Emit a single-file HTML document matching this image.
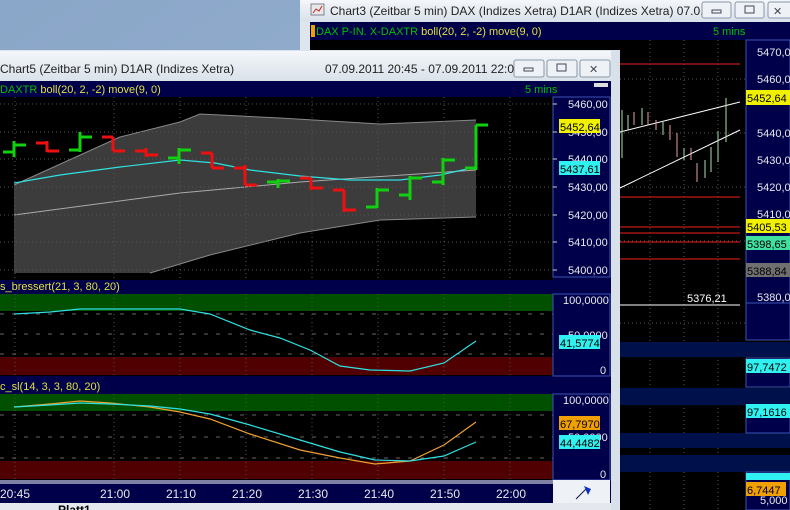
<!DOCTYPE html>
<html><head><meta charset="utf-8"><style>
html,body{margin:0;padding:0;width:790px;height:510px;overflow:hidden;background:#8fa9c8}
svg{display:block;font-family:"Liberation Sans",sans-serif}
</style></head><body>
<svg width="790" height="510" viewBox="0 0 790 510" xmlns="http://www.w3.org/2000/svg">
<defs>
<linearGradient id="tb" x1="0" y1="0" x2="0" y2="1"><stop offset="0" stop-color="#f4f7fa"/><stop offset="1" stop-color="#d9e1ea"/></linearGradient>
<linearGradient id="bg" x1="0" y1="0" x2="1" y2="1"><stop offset="0" stop-color="#8aa6c8"/><stop offset="1" stop-color="#a0b8d4"/></linearGradient>
</defs>
<rect width="790" height="510" fill="url(#bg)"/>
<!-- Chart3 window -->
<rect x="300" y="0" width="490" height="510" fill="#dde5ee"/>
<rect x="300" y="0" width="490" height="22" fill="url(#tb)"/>
<rect x="311" y="4" width="13" height="11" fill="#e8e8e8" stroke="#667" stroke-width="0.8"/>
<path d="M313 13 l3 -4 l3 2 l3 -5" stroke="#c22" fill="none"/>
<text x="330" y="15" font-size="12" fill="#222">Chart3 (Zeitbar 5 min)  DAX (Indizes Xetra) D1AR (Indizes Xetra) 07.0...</text>
<g fill="#eef2f6" stroke="#8a98a8"><rect x="702" y="2" width="29" height="16" rx="2"/><rect x="735" y="2" width="29" height="16" rx="2"/><rect x="768" y="2" width="29" height="16" rx="2"/></g>
<rect x="712" y="10" width="9" height="3" fill="none" stroke="#445"/><rect x="745" y="6" width="9" height="7" fill="none" stroke="#445"/>
<text x="773" y="15" font-size="11" fill="#445">✕</text>
<rect x="310" y="22" width="480" height="488" fill="#000"/>
<rect x="310" y="22" width="480" height="18" fill="#00004a"/>
<rect x="311" y="25" width="4" height="12" fill="#f0a000"/>
<text x="316" y="35" font-size="11" fill="#00c000">DAX P-IN. X-DAXTR <tspan fill="#e0e040">boll(20, 2, -2) move(9, 0)</tspan></text>
<text x="713" y="35" font-size="11" fill="#00c000">5 mins</text>
<!-- right chart grid -->
<g stroke="#555" stroke-dasharray="1,3">
<line x1="650" y1="40" x2="650" y2="510"/><line x1="684" y1="40" x2="684" y2="510"/><line x1="718" y1="40" x2="718" y2="510"/>
<line x1="620" y1="79" x2="745" y2="79"/><line x1="620" y1="133" x2="745" y2="133"/><line x1="620" y1="187" x2="745" y2="187"/><line x1="620" y1="241" x2="745" y2="241"/><line x1="620" y1="323" x2="745" y2="323"/>
</g>
<g stroke="#c01818" stroke-width="1.2"><line x1="620" y1="64" x2="740" y2="64"/><line x1="620" y1="197" x2="740" y2="197"/><line x1="620" y1="227" x2="740" y2="227"/><line x1="620" y1="233" x2="740" y2="233"/><line x1="620" y1="242" x2="740" y2="242"/><line x1="620" y1="259" x2="740" y2="259"/></g>
<line x1="620" y1="305" x2="740" y2="305" stroke="#fff"/>
<text x="687" y="302" font-size="11" fill="#fff">5376,21</text>
<g stroke="#fff"><line x1="620" y1="132" x2="740" y2="102"/><line x1="620" y1="188" x2="740" y2="130"/></g>
<g stroke="#b0e0b0"><line x1="622" y1="110" x2="622" y2="158"/><line x1="628" y1="115" x2="628" y2="130"/><line x1="642" y1="108" x2="642" y2="125"/><line x1="663" y1="122" x2="663" y2="135"/><line x1="684" y1="148" x2="684" y2="160"/><line x1="705" y1="160" x2="705" y2="178"/><line x1="711" y1="147" x2="711" y2="172"/><line x1="718" y1="131" x2="718" y2="162"/><line x1="726" y1="98" x2="726" y2="142"/></g>
<g stroke="#e8a0a0"><line x1="634" y1="112" x2="634" y2="125"/><line x1="648" y1="112" x2="648" y2="125"/><line x1="656" y1="120" x2="656" y2="130"/><line x1="670" y1="125" x2="670" y2="140"/><line x1="677" y1="133" x2="677" y2="157"/><line x1="691" y1="148" x2="691" y2="160"/><line x1="697" y1="163" x2="697" y2="182"/></g>
<!-- right axis -->
<rect x="746" y="40" width="44" height="263" fill="#00004a" stroke="#3a55b0"/>
<g font-size="11" fill="#e8e8e8"><text x="757" y="56">5470,0</text><text x="757" y="83">5460,0</text><text x="757" y="137">5440,0</text><text x="757" y="164">5430,0</text><text x="757" y="191">5420,0</text><text x="757" y="218">5410,0</text><text x="757" y="301">5380,0</text><text x="757" y="327">5370,0</text></g>
<rect x="746" y="303" width="44" height="37" fill="#00004a" stroke="#3a55b0"/>
<rect x="620" y="342" width="170" height="15" fill="#00104a"/>
<rect x="620" y="388" width="170" height="17" fill="#00104a"/>
<rect x="620" y="433" width="170" height="15" fill="#00104a"/>
<rect x="620" y="455" width="170" height="17" fill="#00104a"/>
<rect x="746" y="358" width="44" height="29" fill="#00004a" stroke="#3a55b0"/>
<rect x="746" y="405" width="44" height="28" fill="#00004a" stroke="#3a55b0"/>
<rect x="746" y="472" width="44" height="38" fill="#00004a" stroke="#3a55b0"/>
<rect x="746" y="90" width="44" height="15" fill="#f0f000"/><text x="747" y="102" font-size="11" fill="#000">5452,64</text>
<rect x="746" y="219" width="44" height="14" fill="#f0f000"/><text x="747" y="231" font-size="11" fill="#000">5405,53</text>
<rect x="746" y="236" width="44" height="14" fill="#40e0a0"/><text x="747" y="248" font-size="11" fill="#000">5398,65</text>
<rect x="746" y="263" width="44" height="14" fill="#707070"/><text x="747" y="275" font-size="11" fill="#000">5388,84</text>
<rect x="746" y="359" width="44" height="14" fill="#30f0f0"/><text x="747" y="371" font-size="11" fill="#000">97,7472</text>
<rect x="746" y="404" width="44" height="14" fill="#30f0f0"/><text x="747" y="416" font-size="11" fill="#000">97,1616</text>
<rect x="746" y="473" width="44" height="7" fill="#30f0f0"/>
<rect x="746" y="482" width="40" height="14" fill="#f0a000"/><text x="747" y="494" font-size="11" fill="#000">6,7447</text>
<text x="760" y="504" font-size="11" fill="#e8e8e8">5,000</text>

<!-- Chart5 window -->
<rect x="0" y="50" width="620" height="460" fill="#dbe3ec"/>
<rect x="0" y="51" width="618" height="30" fill="url(#tb)"/>
<text x="0" y="73" font-size="12" fill="#222">Chart5 (Zeitbar 5 min)  D1AR (Indizes Xetra)</text>
<text x="325" y="73" font-size="12" fill="#222">07.09.2011 20:45 - 07.09.2011 22:05</text>
<g fill="#eef2f6" stroke="#8a98a8"><rect x="514" y="60" width="30" height="17" rx="2"/><rect x="547" y="60" width="30" height="17" rx="2"/><rect x="580" y="60" width="30" height="17" rx="2"/></g>
<rect x="524" y="68" width="9" height="3" fill="none" stroke="#445"/><rect x="557" y="64" width="9" height="7" fill="none" stroke="#445"/>
<text x="589" y="73" font-size="11" fill="#445">✕</text>
<rect x="0" y="81" width="611" height="429" fill="#00004a"/>
<text x="0" y="93" font-size="11" fill="#00c000">DAXTR <tspan fill="#e0e040">boll(20, 2, -2) move(9, 0)</tspan></text>
<text x="525" y="93" font-size="11" fill="#00c000">5 mins</text>
<rect x="594" y="83" width="14" height="4" fill="#ddd"/>
<!-- main plot -->
<rect x="0" y="97" width="553" height="183" fill="#000"/>
<path d="M14 185 L120 137 L180 122 L200 114 L280 118 L380 124 L476 120 L476 217 L380 220 L300 233 L210 255 L150 273 L14 273 Z" fill="#3c3c3c"/>
<path d="M14 185 L120 137 L180 122 L200 114 L280 118 L380 124 L476 120" stroke="#888" fill="none"/>
<path d="M476 217 L380 220 L300 233 L210 255 L150 273" stroke="#888" fill="none"/>
<path d="M14 215 L180 193 L300 182 L476 170" stroke="#aaa" fill="none"/>
<g stroke="#555" stroke-dasharray="1,3">
<line x1="15" y1="97" x2="15" y2="280"/><line x1="114" y1="97" x2="114" y2="280"/><line x1="180" y1="97" x2="180" y2="280"/><line x1="246" y1="97" x2="246" y2="280"/><line x1="312" y1="97" x2="312" y2="280"/><line x1="378" y1="97" x2="378" y2="280"/><line x1="444" y1="97" x2="444" y2="280"/><line x1="510" y1="97" x2="510" y2="280"/>
<line x1="0" y1="104" x2="553" y2="104"/><line x1="0" y1="132" x2="553" y2="132"/><line x1="0" y1="159" x2="553" y2="159"/><line x1="0" y1="187" x2="553" y2="187"/><line x1="0" y1="215" x2="553" y2="215"/><line x1="0" y1="242" x2="553" y2="242"/><line x1="0" y1="270" x2="553" y2="270"/>
</g>
<path d="M14 183 L60 175 L120 167 L180 160 L215 163 L250 170 L300 176 L350 180 L400 180 L440 175 L476 167" stroke="#30e0e0" fill="none" stroke-width="1.2"/>
<g stroke-width="3" fill="none">
<path stroke="#10d010" d="M14 141V157M3 152H14M14 145H26"/>
<path stroke="#ee1010" d="M47 141V152M36 143H47M47 151H59"/>
<path stroke="#10d010" d="M80 132V152M69 150H80M80 137H92"/>
<path stroke="#ee1010" d="M113 137V151M102 137H113M113 151H125"/>
<path stroke="#ee1010" d="M146 148V157M135 151H146M146 155H158"/>
<path stroke="#10d010" d="M179 148V164M168 158H179M179 150H191"/>
<path stroke="#ee1010" d="M212 153V168M201 153H212M212 168H224"/>
<path stroke="#ee1010" d="M245 165V185M234 168H245M245 185H257"/>
<path stroke="#10d010" d="M278 179V188M267 182H278M278 181H290"/>
<path stroke="#ee1010" d="M311 178V190M300 178H311M311 188H323"/>
<path stroke="#ee1010" d="M344 190V212M333 190H344M344 210H356"/>
<path stroke="#10d010" d="M377 188V208M366 207H377M377 190H389"/>
<path stroke="#10d010" d="M410 176V200M399 195H410M410 178H422"/>
<path stroke="#10d010" d="M443 158V185M432 182H443M443 160H455"/>
<path stroke="#10d010" d="M476 125V170M465 168H476M476 125H488"/>
</g>
<rect x="553" y="97" width="57" height="180" fill="#00004a" stroke="#3a55b0"/>
<g stroke="#ccc"><line x1="553" y1="104" x2="557" y2="104"/><line x1="553" y1="132" x2="557" y2="132"/><line x1="553" y1="159" x2="557" y2="159"/><line x1="553" y1="187" x2="557" y2="187"/><line x1="553" y1="215" x2="557" y2="215"/><line x1="553" y1="242" x2="557" y2="242"/><line x1="553" y1="270" x2="557" y2="270"/></g>
<g font-size="11" fill="#e8e8e8"><text x="568" y="108">5460,00</text><text x="568" y="136">5450,00</text><text x="568" y="163">5440,00</text><text x="568" y="191">5430,00</text><text x="568" y="219">5420,00</text><text x="568" y="246">5410,00</text><text x="568" y="274">5400,00</text></g>
<rect x="559" y="119" width="41" height="14" fill="#f0f000"/><text x="560" y="131" font-size="11" fill="#000">5452,64</text>
<rect x="559" y="161" width="41" height="14" fill="#30f0f0"/><text x="560" y="173" font-size="11" fill="#000">5437,61</text>

<!-- panel 2 -->
<text x="0" y="290" font-size="11" fill="#e0e040">s_bressert(21, 3, 80, 20)</text>
<rect x="0" y="294" width="553" height="82" fill="#000"/>
<rect x="0" y="294" width="553" height="17" fill="#005000"/>
<rect x="0" y="357" width="553" height="18" fill="#500000"/>
<g stroke="#555" stroke-dasharray="1,3">
<line x1="15" y1="294" x2="15" y2="376"/><line x1="114" y1="294" x2="114" y2="376"/><line x1="180" y1="294" x2="180" y2="376"/><line x1="246" y1="294" x2="246" y2="376"/><line x1="312" y1="294" x2="312" y2="376"/><line x1="378" y1="294" x2="378" y2="376"/><line x1="444" y1="294" x2="444" y2="376"/><line x1="510" y1="294" x2="510" y2="376"/>
</g>
<g stroke="#666" stroke-dasharray="4,8"><line x1="0" y1="314" x2="553" y2="314"/><line x1="0" y1="334" x2="553" y2="334"/><line x1="0" y1="354" x2="553" y2="354"/></g>
<path d="M14 314 L50 312 L80 309 L120 309 L180 309 L210 314 L250 330 L280 338 L310 350 L340 366 L370 370 L410 371 L444 363 L476 341" stroke="#30e0e0" fill="none" stroke-width="1.2"/>
<rect x="553" y="294" width="57" height="82" fill="#00004a" stroke="#3a55b0"/>
<g font-size="11" fill="#e8e8e8"><text x="563" y="304">100,0000</text><text x="568" y="339">50,0000</text><text x="600" y="374">0</text></g>
<rect x="559" y="335" width="41" height="14" fill="#30f0f0"/><text x="560" y="347" font-size="11" fill="#000">41,5774</text>

<!-- panel 3 -->
<text x="0" y="390" font-size="11" fill="#e0e040">c_sl(14, 3, 3, 80, 20)</text>
<rect x="0" y="394" width="553" height="86" fill="#000"/>
<rect x="0" y="394" width="553" height="17" fill="#005000"/>
<rect x="0" y="461" width="553" height="18" fill="#500000"/>
<g stroke="#555" stroke-dasharray="1,3">
<line x1="15" y1="394" x2="15" y2="480"/><line x1="114" y1="394" x2="114" y2="480"/><line x1="180" y1="394" x2="180" y2="480"/><line x1="246" y1="394" x2="246" y2="480"/><line x1="312" y1="394" x2="312" y2="480"/><line x1="378" y1="394" x2="378" y2="480"/><line x1="444" y1="394" x2="444" y2="480"/><line x1="510" y1="394" x2="510" y2="480"/>
</g>
<g stroke="#666" stroke-dasharray="4,8"><line x1="0" y1="415" x2="553" y2="415"/><line x1="0" y1="437" x2="553" y2="437"/><line x1="0" y1="458" x2="553" y2="458"/></g>
<path d="M14 407 L50 404 L80 401 L110 403 L150 407 L180 412 L210 419 L250 434 L300 450 L340 458 L375 464 L410 461 L444 445 L476 422" stroke="#f0a030" fill="none" stroke-width="1.2"/>
<path d="M14 407 L50 405 L80 403 L110 404 L150 406 L180 409 L210 414 L250 425 L300 440 L340 452 L375 460 L410 461 L444 456 L476 442" stroke="#30e0e0" fill="none" stroke-width="1.2"/>
<rect x="553" y="394" width="57" height="86" fill="#00004a" stroke="#3a55b0"/>
<g font-size="11" fill="#e8e8e8"><text x="563" y="404">100,0000</text><text x="568" y="441">50,0000</text><text x="600" y="478">0</text></g>
<rect x="559" y="416" width="41" height="14" fill="#f0a000"/><text x="560" y="428" font-size="11" fill="#000">67,7970</text>
<rect x="559" y="435" width="41" height="14" fill="#30f0f0"/><text x="560" y="447" font-size="11" fill="#000">44,4482</text>

<!-- time axis -->
<line x1="0" y1="481" x2="553" y2="481" stroke="#fff"/>
<line x1="0" y1="483" x2="553" y2="483" stroke="#fff"/>
<g font-size="12" fill="#e8e8e8"><text x="0" y="498">20:45</text><text x="100" y="498">21:00</text><text x="166" y="498">21:10</text><text x="232" y="498">21:20</text><text x="298" y="498">21:30</text><text x="364" y="498">21:40</text><text x="430" y="498">21:50</text><text x="496" y="498">22:00</text></g>
<rect x="553" y="480" width="57" height="23" fill="#eef2f6"/>
<path d="M576 499 L586 489" stroke="#114" /><path d="M584 486 L591 489 L588 495 Z" fill="#1030c0"/>
<rect x="0" y="503" width="611" height="7" fill="#e4e8ee"/>
<text x="58" y="514" font-size="12" font-weight="bold" fill="#000">Platt1</text>
<rect x="611" y="50" width="9" height="460" fill="#d8e0ea"/>
</svg>
</body></html>
